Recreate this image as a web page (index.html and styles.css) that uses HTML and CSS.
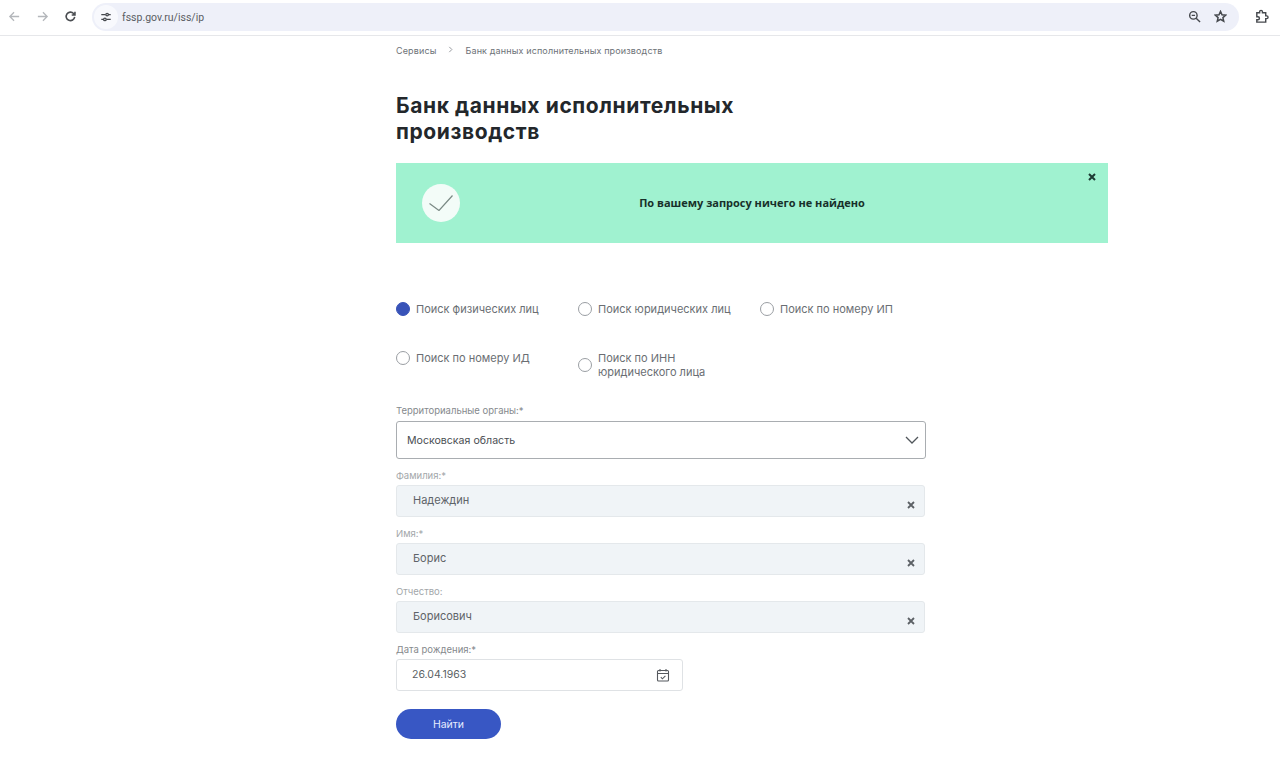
FILE: index.html
```html
<!DOCTYPE html>
<html lang="ru">
<head>
<meta charset="utf-8">
<title>Банк данных исполнительных производств</title>
<link rel="stylesheet" href="styles.css">
</head>
<body>
<header class="toolbar">
  <svg class="tb-icon back" viewBox="0 0 14 14"><path d="M12 7H2M6.500 2.500 2 7l4.500 4.500"/></svg>
  <svg class="tb-icon fwd" viewBox="0 0 14 14"><path d="M2 7h10M7.500 2.500 12 7l-4.500 4.500"/></svg>
  <svg class="tb-icon reload" viewBox="0 0 14 14"><path d="M11.500 7.500A4.600 4.600 0 1 1 10.300 3.700L11.800 5.200M11.800 1.800v3.500H8.300"/></svg>
  <div class="omnibox">
    <span class="tune"><svg viewBox="0 0 14 14"><path d="M1.500 4.200h5M10 4.200h2.500M1.500 9.800H4M7.500 9.800h5"/><circle cx="8.300" cy="4.200" r="1.500"/><circle cx="5.700" cy="9.800" r="1.500"/></svg></span>
    <span class="url">fssp.gov.ru/iss/ip</span>
    <svg class="omni-icon zoom" viewBox="0 0 14 14"><circle cx="5.800" cy="5.800" r="4"/><path d="M8.800 8.800 13 13M4 5.800h3.600"/></svg>
    <svg class="omni-icon star" viewBox="0 0 14 14"><path d="M7 1.500 8.600 5.200l4 .35-3 2.650.9 3.900L7 10l-3.500 2.100.9-3.900-3-2.650 4-.35z"/></svg>
  </div>
  <svg class="tb-icon ext" viewBox="0 0 16 16"><path d="M3 4h3V3a1.500 1.500 0 0 1 3 0v1h3.500v3.300h1a1.500 1.500 0 0 1 0 3h-1V14H3v-2.500h1.200a1.600 1.600 0 0 0 0-3.200H3z"/></svg>
</header>

<main class="page">
  <nav class="crumbs">
    <span>Сервисы</span>
    <svg class="crumb-sep" viewBox="0 0 6 8"><path d="M1 1l3 3-3 3"/></svg>
    <span>Банк данных исполнительных производств</span>
  </nav>

  <h1 class="title">Банк данных исполнительных<br>производств</h1>

  <section class="alert">
    <span class="alert-icon"><svg viewBox="0 0 24 16"><path d="M.5 8.500 10 15.500 23.500 .5"/></svg></span>
    <p class="alert-text">По вашему запросу ничего не найдено</p>
    <svg class="alert-close" viewBox="0 0 8 8"><path d="M1 1l6 6M7 1 1 7"/></svg>
  </section>

  <div class="radios">
    <label class="radio first"><span class="dot on"></span><span>Поиск физических лиц</span></label>
    <label class="radio first"><span class="dot"></span><span>Поиск юридических лиц</span></label>
    <label class="radio first"><span class="dot"></span><span>Поиск по номеру ИП</span></label>
    <label class="radio second"><span class="dot"></span><span>Поиск по номеру ИД</span></label>
    <label class="radio second two-line"><span class="dot"></span><span>Поиск по ИНН<br>юридического лица</span></label>
  </div>

  <div class="field">
    <div class="label">Территориальные органы:*</div>
    <div class="select"><span>Московская область</span>
      <svg class="chevron" viewBox="0 0 14 8"><path d="M1 1l6 6 6-6"/></svg>
    </div>
  </div>

  <div class="field">
    <div class="label low faint">Фамилия:*</div>
    <div class="input"><span>Надеждин</span><svg class="clear" viewBox="0 0 8 8"><path d="M1 1l6 6M7 1 1 7"/></svg></div>
  </div>

  <div class="field">
    <div class="label low faint">Имя:*</div>
    <div class="input"><span>Борис</span><svg class="clear" viewBox="0 0 8 8"><path d="M1 1l6 6M7 1 1 7"/></svg></div>
  </div>

  <div class="field">
    <div class="label low faint">Отчество:</div>
    <div class="input"><span>Борисович</span><svg class="clear" viewBox="0 0 8 8"><path d="M1 1l6 6M7 1 1 7"/></svg></div>
  </div>

  <div class="field">
    <div class="label low">Дата рождения:*</div>
    <div class="date"><span>26.04.1963</span>
      <svg class="cal" viewBox="0 0 14 14"><rect x="1.500" y="2.500" width="11" height="10.500" rx="1"/><path d="M1.500 5.500h11M4 1v2.500M10 1v2.500M4.800 9.200l1.600 1.600 3-3"/></svg>
    </div>
  </div>

  <button class="submit" type="button">Найти</button>
</main>
</body>
</html>
```

FILE: styles.css
```css
* { box-sizing: border-box; }
html, body { margin: 0; padding: 0; }
body {
  background: #fff;
  font-family: Inter, "Open Sans", "Liberation Sans", sans-serif;
  color: #3a3f44;
  height: 766px;
  overflow: hidden;
}
svg { display: block; fill: none; stroke: currentColor; }

.toolbar {
  height: 36px;
  display: flex;
  align-items: center;
  border-bottom: 1px solid #e6e7ea;
  padding: 0 12px 2px 8px;
}
.tb-icon { width: 13px; height: 13px; stroke-width: 1.400; color: #b4b7bb; flex: none; }
.fwd { margin-left: 15px; }
.reload { margin-left: 15px; color: #4a4d51; stroke-width: 1.700; }
.omnibox {
  flex: none;
  width: 1147px;
  height: 28px;
  margin-left: 15px;
  border-radius: 14px;
  background: #eef0f9;
  display: flex;
  align-items: center;
  padding: 0 12px 0 2px;
  color: #45484d;
}
.tune {
  width: 24px; height: 24px; border-radius: 50%;
  background: #f8f9fd;
  display: flex; align-items: center; justify-content: center;
}
.tune svg { width: 12px; height: 12px; stroke-width: 1.500; }
.url { margin-left: 4px; padding-top: 1px; font-family: Roboto, sans-serif; font-size: 10.500px; flex: 1; color: #5a5d63; }
.omni-icon { width: 13px; height: 13px; stroke-width: 1.500; }
.star { margin-left: 13px; stroke-width: 1.600; }
.ext { margin-left: 15px; width: 15px; height: 15px; color: #45484d; stroke-width: 1.500; }

.page { width: 712px; margin-left: 396px; }

.crumbs {
  display: flex; align-items: center;
  height: 28px;
  font-size: 9px;
  letter-spacing: .14px;
  color: #6d7277;
}
.crumb-sep { width: 6px; height: 7px; margin: 0 12px 1px 11px; color: #8a8e92; stroke-width: 1; }

.title {
  margin: 29px 0 0;
  font-size: 21px;
  line-height: 26px;
  font-weight: 700;
  color: #23272b;
  letter-spacing: .6px;
}

.alert {
  position: relative;
  height: 80px;
  margin-top: 18px;
  background: #a0f2d0;
  display: flex;
  align-items: center;
  padding-left: 26px;
}
.alert-icon {
  width: 38px; height: 38px; border-radius: 50%;
  background: #f3fcf8;
  display: flex; align-items: center; justify-content: center;
  flex: none;
}
.alert-icon svg { width: 24px; height: 16px; color: #7a8a85; stroke-width: 1.200; }
.alert-text {
  margin: 0 0 2px;
  flex: 1;
  padding-right: 64px;
  text-align: center;
  font-family: "Open Sans", sans-serif;
  font-size: 11px;
  font-weight: 700;
  color: #17302a;
}
.alert-close {
  position: absolute; top: 10px; right: 12px;
  width: 8px; height: 8px;
  color: #1d3a33; stroke-width: 2;
}

.radios {
  display: grid;
  grid-template-columns: 182px 182px auto;
  margin-top: 52px;
  margin-bottom: 17px;
  font-size: 11px;
  line-height: 14px;
  color: #6a6e73;
}
.radio { display: flex; align-items: center; gap: 6px; }
.radio.first { height: 27px; margin-bottom: 22px; }
.radio.second { align-self: start; height: 27px; }
.radio.two-line { height: 42px; }
.dot {
  width: 14px; height: 14px; border-radius: 50%;
  border: 1.500px solid #9a9ea3;
  background: #fff;
  flex: none;
}
.dot.on { background: #3853b8; border-color: #3853b8; }

.field { width: 530px; }
.label {
  font-size: 9.500px;
  line-height: 16px;
  margin-bottom: 2px;
  color: #85898d;
}
.label.low { line-height: 18px; margin-bottom: 0; }
.label.faint { color: #a3a7aa; }

.select {
  display: flex; align-items: center; justify-content: space-between;
  height: 38px;
  border: 1px solid #a9adb1;
  border-radius: 3px;
  padding: 0 6px 0 10px;
  font-size: 10.600px;
  color: #4a4e53;
  margin-bottom: 8px;
}
.chevron { width: 14px; height: 8px; color: #50565b; stroke-width: 1.300; }

.input {
  width: 529px;
  height: 32px;
  display: flex; align-items: center; justify-content: space-between;
  background: #f0f4f7;
  border: 1px solid #e4e8eb;
  border-radius: 3px;
  padding: 0 9px 2px 16px;
  font-size: 11px;
  color: #5e6368;
  margin-bottom: 8px;
}
.clear { width: 8px; height: 8px; margin-top: 10px; color: #5c6165; stroke-width: 1.800; }

.date {
  width: 287px;
  height: 32px;
  display: flex; align-items: center; justify-content: space-between;
  border: 1px solid #dfe2e5;
  border-radius: 3px;
  padding: 0 12px 2px 15px;
  font-size: 10.500px;
  color: #5a5f64;
}
.cal { width: 14px; height: 14px; margin-top: 2px; color: #55595e; stroke-width: 1.100; }

.submit {
  display: block;
  width: 105px;
  height: 30px;
  margin-top: 18px;
  border: 0;
  border-radius: 15px;
  background: #3857c4;
  color: #e6ecff;
  font-family: inherit;
  font-size: 10.500px;
}
```
